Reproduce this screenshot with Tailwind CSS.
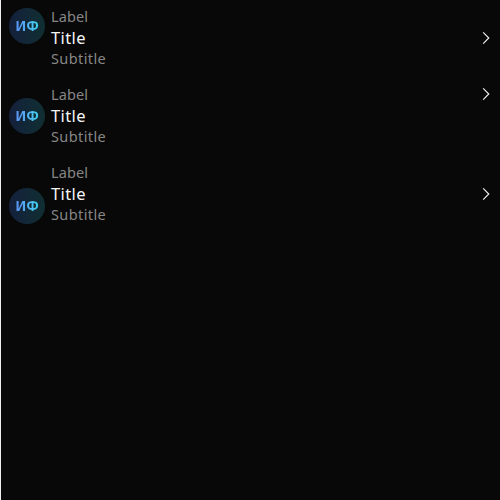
<!DOCTYPE html>
<html lang="en">
<head>
<meta charset="utf-8">
<title>Cells</title>
<script src="https://cdn.jsdelivr.net/npm/@tailwindcss/browser@4"></script>
</head>
<body class="h-[500px] overflow-hidden border-l border-[#eef1f1] bg-[#080808] font-['Noto_Sans',sans-serif] text-white">
<main class="flex flex-col gap-[18px] py-2 pl-2 pr-1.5">
  <section class="flex h-[60px] items-center">
    <div class="flex size-9 shrink-0 self-start items-center justify-center rounded-full bg-linear-to-r from-[#14203c] to-[#102f32]"><span class="bg-linear-to-r from-[#5b91f5] to-[#40d0ee] bg-clip-text text-[14px] leading-5 font-bold text-transparent">ИФ</span></div>
    <div class="ml-1.5 flex flex-1 flex-col"><span class="h-[19px] text-[14.5px] leading-[17px] tracking-[0.1px] text-[#868686]">Label</span><span class="h-[22px] text-[16.5px] leading-[22px] tracking-[0.4px] text-[#f5f5f5]">Title</span><span class="h-[19px] text-[14.5px] leading-[19px] tracking-[0.4px] text-[#868686]">Subtitle</span></div>
    <svg class="size-4" viewBox="0 0 16 16" fill="none" stroke="#f5f5f5" stroke-width="1.1"><path d="M5.2 2.4L10.8 8L5.2 13.6"/></svg>
  </section>
  <section class="flex h-[60px] items-center">
    <div class="flex size-9 shrink-0 items-center justify-center rounded-full bg-linear-to-r from-[#14203c] to-[#102f32]"><span class="bg-linear-to-r from-[#5b91f5] to-[#40d0ee] bg-clip-text text-[14px] leading-5 font-bold text-transparent">ИФ</span></div>
    <div class="ml-1.5 flex flex-1 flex-col"><span class="h-[19px] text-[14.5px] leading-[17px] tracking-[0.1px] text-[#868686]">Label</span><span class="h-[22px] text-[16.5px] leading-[22px] tracking-[0.4px] text-[#f5f5f5]">Title</span><span class="h-[19px] text-[14.5px] leading-[19px] tracking-[0.4px] text-[#868686]">Subtitle</span></div>
    <svg class="size-4 self-start" viewBox="0 0 16 16" fill="none" stroke="#f5f5f5" stroke-width="1.1"><path d="M5.2 2.4L10.8 8L5.2 13.6"/></svg>
  </section>
  <section class="flex h-[60px] items-center">
    <div class="flex size-9 shrink-0 self-end items-center justify-center rounded-full bg-linear-to-r from-[#14203c] to-[#102f32]"><span class="bg-linear-to-r from-[#5b91f5] to-[#40d0ee] bg-clip-text text-[14px] leading-5 font-bold text-transparent">ИФ</span></div>
    <div class="ml-1.5 flex flex-1 flex-col"><span class="h-[19px] text-[14.5px] leading-[17px] tracking-[0.1px] text-[#868686]">Label</span><span class="h-[22px] text-[16.5px] leading-[22px] tracking-[0.4px] text-[#f5f5f5]">Title</span><span class="h-[19px] text-[14.5px] leading-[19px] tracking-[0.4px] text-[#868686]">Subtitle</span></div>
    <svg class="size-4" viewBox="0 0 16 16" fill="none" stroke="#f5f5f5" stroke-width="1.1"><path d="M5.2 2.4L10.8 8L5.2 13.6"/></svg>
  </section>
</main>
</body>
</html>
